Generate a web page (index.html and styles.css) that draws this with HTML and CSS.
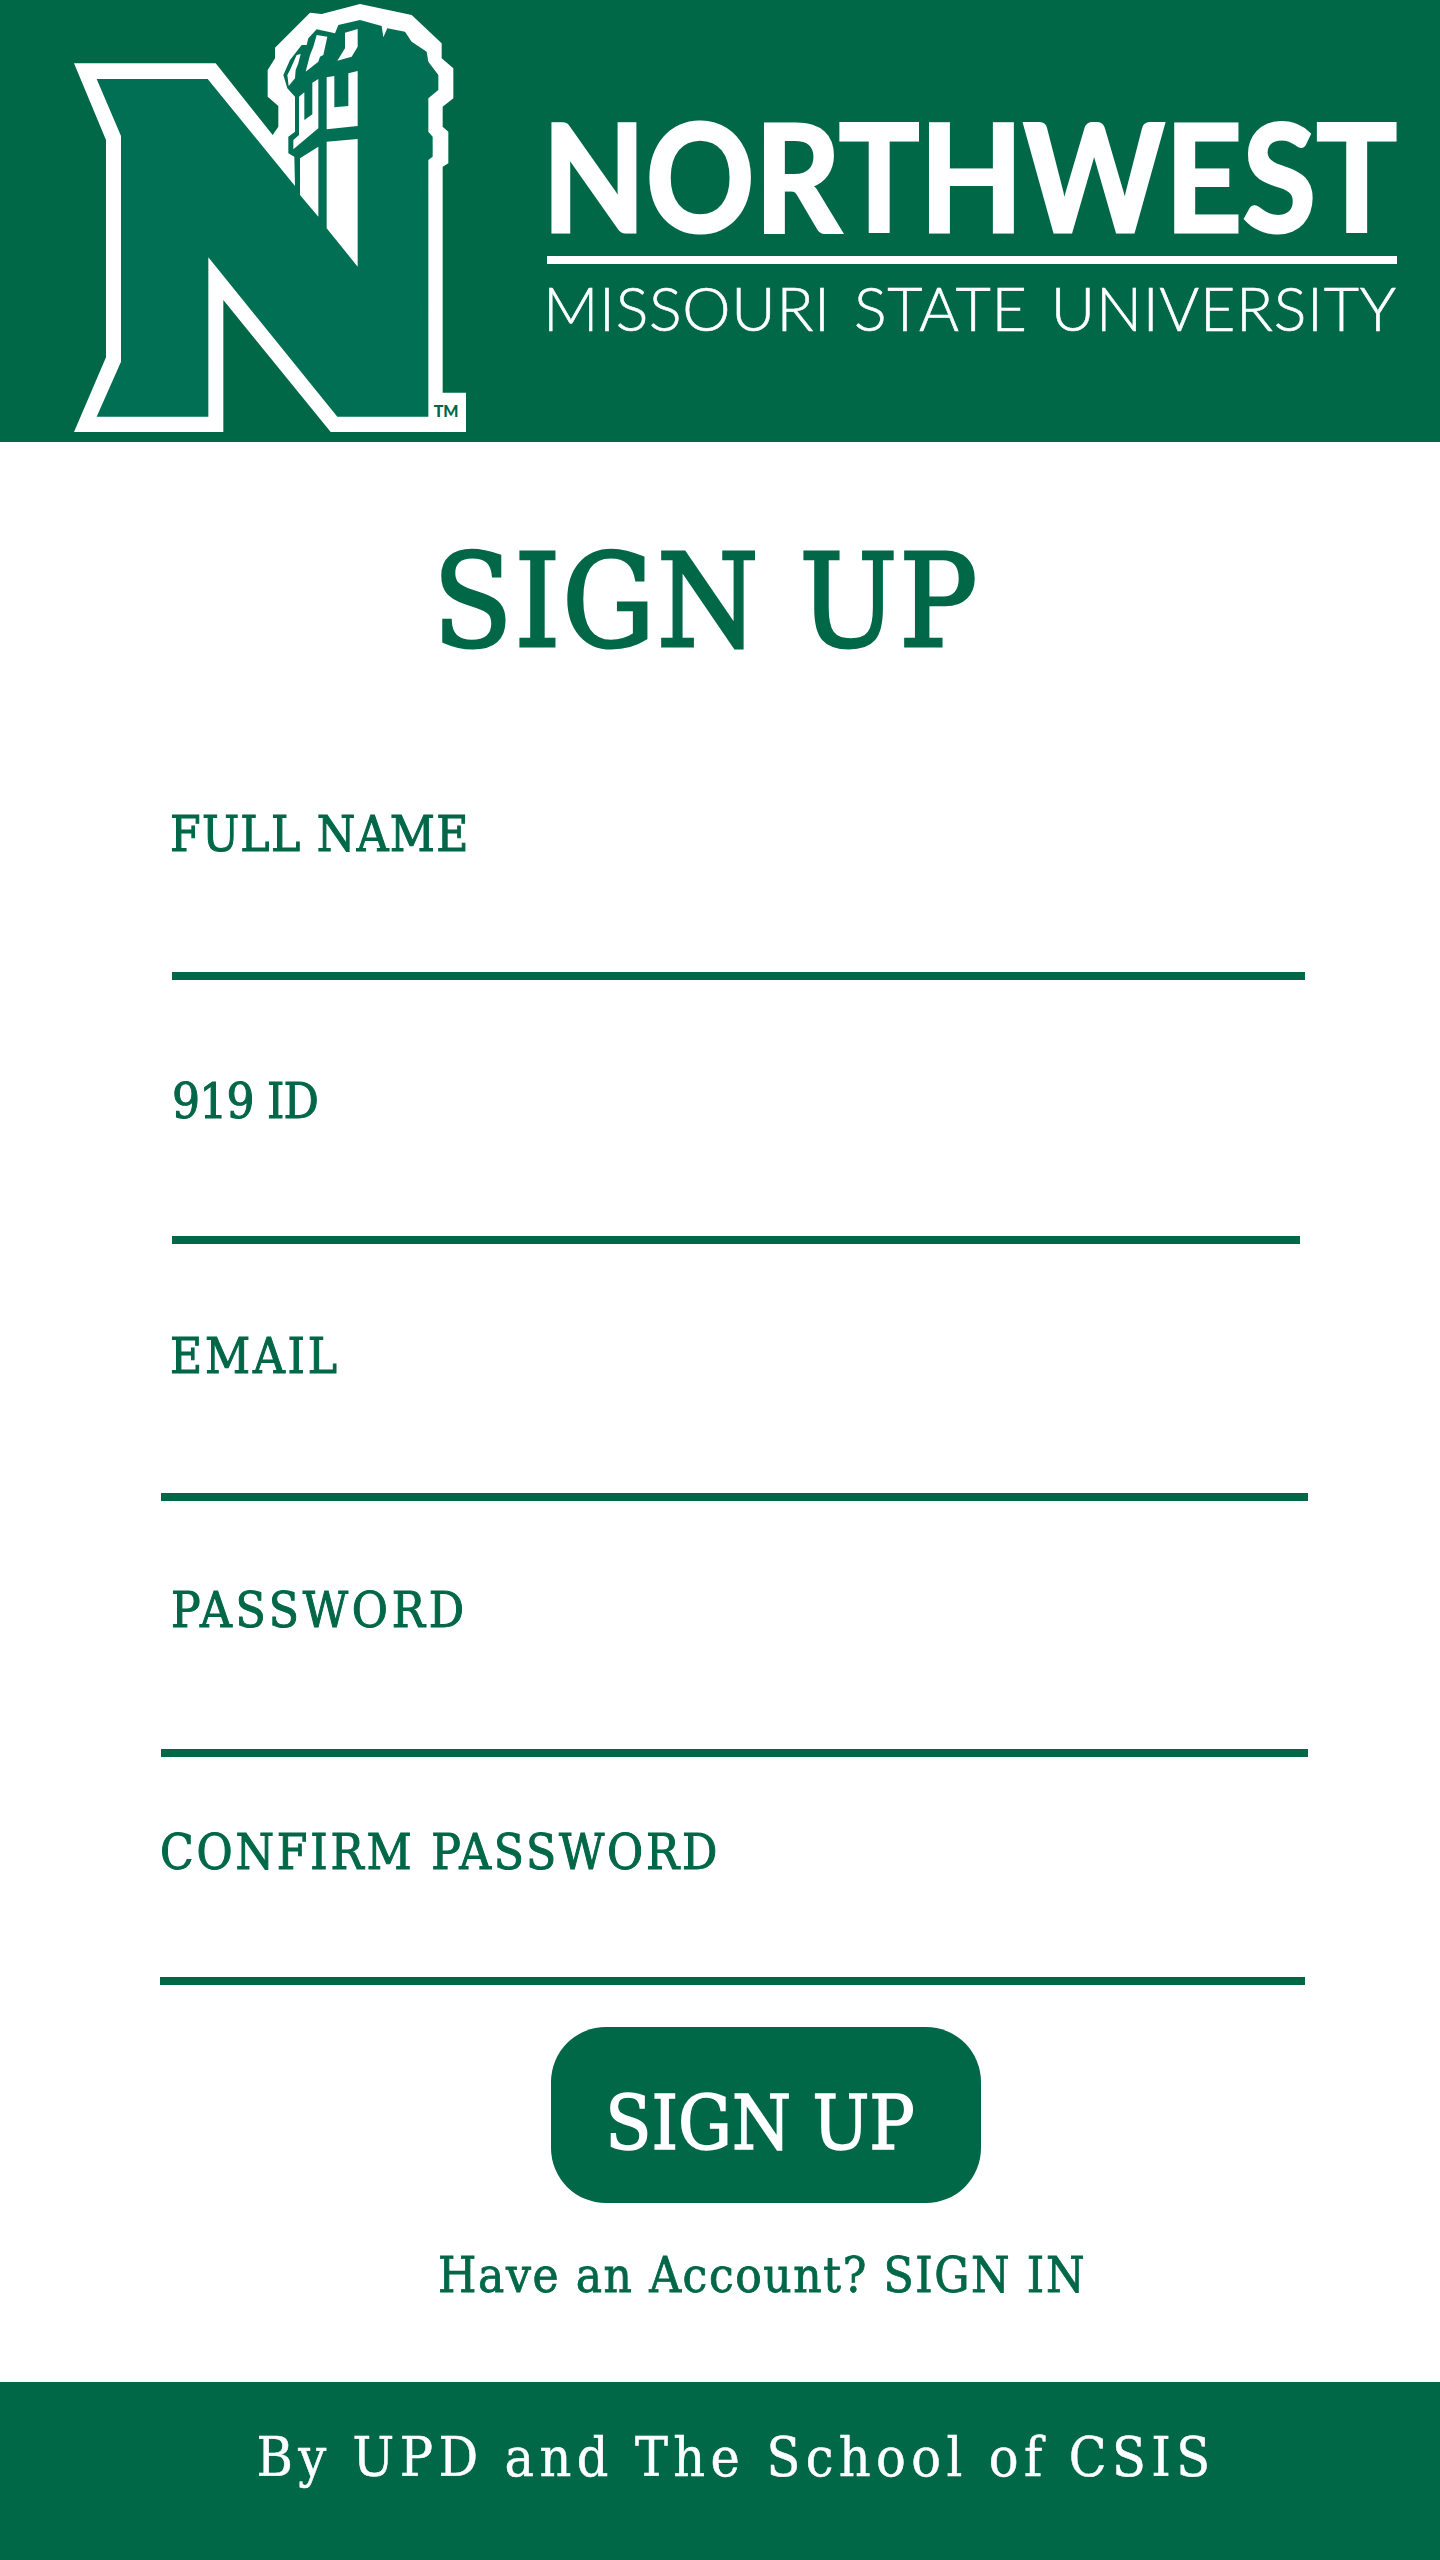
FILE: index.html
```html
<!DOCTYPE html>
<html lang="en">
<head>
<meta charset="utf-8">
<title>Sign Up</title>
<link rel="stylesheet" href="styles.css">
</head>
<body>
<header class="banner">
  <svg class="crest" viewBox="0 0 1350 1326" aria-hidden="true">
    <path class="c-white" d="M72 190H497L668 405L685 380V318L653 290V210L675 175V143L780 38L815 42L930 12L1085 45L1175 130V175L1210 205V295L1178 320V380L1195 395V490L1178 500V1178H1248V1296H842L520 900V1296H72L168 1072V420Z"/>
    <path class="c-green" d="M140 237H473L735 558L733 470L715 460V410L735 395V290L712 265L700 225L720 180L755 135H770L775 115L800 88L855 100L865 75L930 60L995 78L1000 112L1012 85L1065 95L1085 125L1130 155L1135 185L1165 225V270L1135 295V395L1148 410V470L1135 480V1250H862L475 772V1250H140L213 1085V408Z"/>
    <path class="c-white" d="M750 475L805 440V650L750 585ZM830 425L923 417V800L830 685ZM830 232L853 228V322L895 318V220L923 213V378L830 388ZM730 448V420L747 405V290L763 277V360L787 343V248L805 237V385Z"/>
    <path class="c-white" d="M720 210L740 165L752 162L745 190L737 210L735 235L716 258L712 225ZM800 105L832 110L820 165L810 170L805 185L767 215L780 165L790 140ZM885 98L923 87V140L905 170L862 182L885 145Z"/>
    <text class="tm" x="1151" y="1250">TM</text>
  </svg>
  <div class="wordmark">
    <div class="wm-top">NORTHWEST</div>
    <div class="wm-rule"></div>
    <div class="wm-sub">MISSOURI STATE UNIVERSITY</div>
  </div>
</header>
<main class="panel">
  <h1 class="title">SIGN UP</h1>
  <form class="fields">
    <div class="field f1"><label>FULL NAME</label><span class="rule"></span></div>
    <div class="field f2"><label>919 ID</label><span class="rule"></span></div>
    <div class="field f3"><label>EMAIL</label><span class="rule"></span></div>
    <div class="field f4"><label>PASSWORD</label><span class="rule"></span></div>
    <div class="field f5"><label>CONFIRM PASSWORD</label><span class="rule"></span></div>
  </form>
  <button class="cta" type="button">SIGN UP</button>
  <p class="switch">Have an Account? SIGN IN</p>
</main>
<footer class="foot">By UPD and The School of CSIS</footer>
</body>
</html>
```
FILE: styles.css
```css
* { box-sizing: border-box; }
html, body { margin: 0; padding: 0; }
body { width: 1440px; height: 2560px; display: flex; flex-direction: column; background: #fff; color: #006747; font-family: "DejaVu Serif Condensed", "DejaVu Serif", serif; overflow: hidden; }
.banner { height: 442px; background: #006747; display: flex; padding-left: 50px; }
.crest { width: 450px; height: 442px; flex: none; }
.c-white { fill: #fff; }
.c-green { fill: #016f53; }
.tm { fill: #006747; font-family: Lato, sans-serif; font-size: 48px; font-weight: 900; }
.wordmark { margin-left: 47px; padding-top: 100px; width: 850px; color: #fff; font-family: Lato, sans-serif; }
.wm-top { font-size: 149px; font-weight: 700; line-height: 150px; height: 150px; white-space: nowrap; transform: scaleX(.904); transform-origin: left center; margin-left: -5px; -webkit-text-stroke: 3px #fff; }
.wm-rule { height: 8px; margin-top: 6px; background: #fff; }
.wm-sub { font-size: 61px; font-weight: 300; line-height: 70px; margin-top: 9px; white-space: nowrap; letter-spacing: .7px; word-spacing: 6px; margin-left: -4px; -webkit-text-stroke: .6px #fff; }
.panel { flex: 1; display: flex; flex-direction: column; }
.title { margin: 94px 0 0 433px; font-size: 129px; line-height: 130px; font-weight: 400; letter-spacing: 2px; -webkit-text-stroke: 3px #006747; }
.fields { margin-top: 144px; display: flex; flex-direction: column; }
.field { display: flex; flex-direction: column; }
.field label { font-size: 49px; line-height: 50px; white-space: nowrap; -webkit-text-stroke: 1px #006747; }
.rule { display: block; height: 8px; background: #006747; }
.f1 label { margin-left: 170px; margin-bottom: 112px; letter-spacing: 1.3px; }
.f1 .rule { margin-left: 172px; width: 1133px; }
.f2 { margin-top: 97px; }
.f2 label { margin-left: 172px; margin-bottom: 109px; letter-spacing: -.8px; }
.f2 .rule { margin-left: 172px; width: 1128px; }
.f3 { margin-top: 88px; }
.f3 label { margin-left: 170px; margin-bottom: 111px; letter-spacing: 2.8px; }
.f3 .rule { margin-left: 161px; width: 1147px; }
.f4 { margin-top: 85px; }
.f4 label { margin-left: 171px; margin-bottom: 113px; letter-spacing: 3.8px; }
.f4 .rule { margin-left: 161px; width: 1147px; }
.f5 { margin-top: 71px; }
.f5 label { margin-left: 160px; margin-bottom: 99px; letter-spacing: 2.8px; }
.f5 .rule { margin-left: 160px; width: 1145px; }
.cta { margin: 42px 0 0 551px; width: 430px; height: 176px; border: 0; border-radius: 55px; background: #006747; color: #fff; font: inherit; font-size: 75px; padding: 16px 12px 0 0; -webkit-text-stroke: 1.5px #fff; }
.switch { margin: 45px 0 0 438px; font-size: 49px; line-height: 56px; white-space: nowrap; letter-spacing: 1.6px; -webkit-text-stroke: .8px #006747; }
.foot { height: 178px; background: #006747; color: #fff; display: flex; align-items: center; justify-content: center; font-size: 55px; letter-spacing: 5.4px; padding: 0 0 28px 32px; -webkit-text-stroke: .5px #fff; }
```
